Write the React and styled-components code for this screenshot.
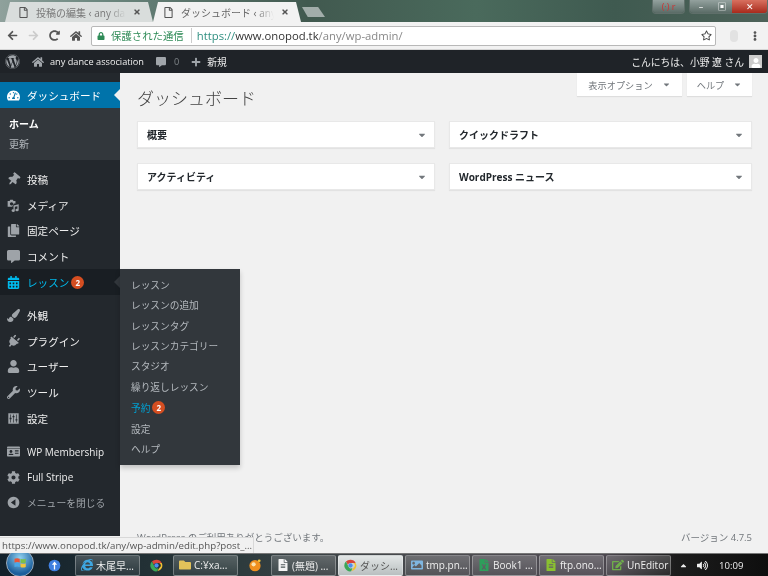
import React from 'react'
import styled, { createGlobalStyle } from 'styled-components'
import {
  FaWordpress, FaHome, FaCommentAlt, FaPlus, FaTachometerAlt, FaThumbtack, FaCopy,
  FaCalendarAlt, FaPaintBrush, FaPlug, FaUser, FaWrench, FaIdCard, FaCog,
  FaRegStar, FaLock, FaArrowLeft, FaArrowRight, FaRedoAlt, FaEllipsisV,
  FaRegFile, FaTimes, FaCaretDown, FaCaretUp, FaVolumeUp, FaInternetExplorer, FaFolder,
  FaFileExcel, FaImage, FaEdit, FaFileAlt
} from 'react-icons/fa'

const JP = `"Open Sans", "Noto Sans CJK JP", sans-serif`

const GlobalStyle = createGlobalStyle`
  html, body { margin: 0; padding: 0; }
  body { width: 768px; height: 576px; overflow: hidden; font-family: ${JP}; }
  * { box-sizing: border-box; }
`

const Screen = styled.div`
  position: relative;
  width: 768px;
  height: 576px;
  display: flex;
  flex-direction: column;
  overflow: hidden;
  background: #f1f1f1;
  filter: blur(0.3px);
`

const TabStrip = styled.div`
  height: 22px;
  display: flex;
  align-items: flex-end;
  padding-left: 5px;
  position: relative;
  background: linear-gradient(90deg, #8fa19c 0, #6d8880 12%, #41594f 40%, #4a6a5c 62%, #3f5a50 80%, #4d6259 100%);
`

const Tab = styled.div`
  width: 148px;
  height: 20px;
  display: flex;
  align-items: center;
  gap: 7px;
  padding: 0 12px 0 ${p => (p.$active ? 10 : 13)}px;
  font-size: 10px;
  white-space: nowrap;
  color: ${p => (p.$active ? '#666' : '#777')};
  background: ${p => (p.$active ? '#f2f2f2' : '#d9dddc')};
  clip-path: polygon(5px 0, calc(100% - 5px) 0, 100% 100%, 0 100%);
  svg { flex: none; color: #555; }
`

const TabTitle = styled.span`
  flex: 1;
  overflow: hidden;
  mask-image: linear-gradient(90deg, #000 80%, transparent);
`

const NewTab = styled.div`
  width: 23px;
  height: 10px;
  margin: 0 0 5px 1px;
  background: #a2adaa;
  clip-path: polygon(0 0, 70% 0, 100% 100%, 25% 100%);
`

const WindowControls = styled.div`
  position: absolute;
  top: 0;
  left: 652px;
  display: flex;
  gap: 4px;
`

const ControlGroup = styled.div`
  height: 14px;
  display: flex;
  border: 1px solid #5f6f6a;
  border-top: 0;
  border-radius: 0 0 4px 4px;
  overflow: hidden;
`

const ControlButton = styled.div`
  width: ${p => p.$w}px;
  display: flex;
  align-items: center;
  justify-content: center;
  font-size: 9px;
  line-height: 1;
  color: ${p => p.$color || '#fff'};
  background: ${p => p.$bg || 'linear-gradient(#93a19e, #5a6b66)'};
`

const Toolbar = styled.div`
  height: 28px;
  display: flex;
  align-items: center;
  background: #f2f2f2;
  border-bottom: 1px solid #d5d5d5;
`

const NavIcons = styled.div`
  width: 91px;
  display: flex;
  align-items: center;
  gap: 10px;
  padding-left: 7px;
  color: #555;
  font-size: 11px;
`

const AddressBar = styled.div`
  width: 625px;
  height: 20px;
  display: flex;
  align-items: center;
  padding: 0 3px 0 5px;
  background: #fff;
  border: 1px solid #b8b8b8;
  border-radius: 2px;
  font-size: 11.3px;
  white-space: nowrap;
`

const Secure = styled.span`
  display: flex;
  align-items: center;
  gap: 6px;
  color: #2e8b57;
  font-size: 10.4px;
  padding-right: 7px;
  margin-right: 5px;
  border-right: 1px solid #ccc;
`

const Url = styled.span`
  flex: 1;
  color: #888;
  b { font-weight: 400; color: #333; }
  i { font-style: normal; color: #2f8f80; }
`

const ExtraIcons = styled.div`
  flex: 1;
  display: flex;
  align-items: center;
  justify-content: space-between;
  padding: 0 8px 0 14px;
  color: #555;
  font-size: 10px;
`

const ExtIcon = styled.span`
  width: 8px;
  height: 12px;
  border-radius: 4px;
  background: #e2e2e2;
`

const AdminBar = styled.div`
  height: 23px;
  display: flex;
  align-items: center;
  background: #1f2328;
  color: #eee;
  font-size: 9.2px;
  padding: 0 6px 0 5px;
  white-space: nowrap;
`

const BarItem = styled.div`
  display: flex;
  align-items: center;
  gap: ${p => p.$gap || 6}px;
  margin-right: ${p => p.$mr || 0}px;
  color: ${p => (p.$muted ? '#7f8488' : '#eee')};
  svg { color: #a0a5aa; }
`

const BarLabel = styled.span`
  font-size: 9.8px;
`

const Greeting = styled.div`
  margin-left: auto;
  display: flex;
  align-items: center;
  gap: 5px;
  font-size: 9.8px;
`

const Avatar = styled.div`
  width: 13px;
  height: 13px;
  display: flex;
  align-items: flex-end;
  justify-content: center;
  background: #ccc;
  color: #fff;
  font-size: 10px;
`

const Body = styled.div`
  flex: 1;
  display: flex;
  min-height: 0;
`

const Sidebar = styled.nav`
  width: 120px;
  height: 463px;
  flex: none;
  padding-top: 9px;
  background: #23282d;
`

const MenuItem = styled.div`
  position: relative;
  height: ${p => p.$h || 25.6}px;
  display: flex;
  align-items: center;
  gap: 7px;
  padding-left: 7px;
  font-size: ${p => p.$size || 10.6}px;
  white-space: nowrap;
  color: ${p => p.$color || '#eee'};
  background: ${p => p.$bg || 'transparent'};
  svg { flex: none; width: 13px; color: ${p => p.$iconColor || '#9ea3a8'}; }
`

const Tilted = styled.span`
  display: flex;
  transform: rotate(${p => p.$deg}deg);
`

const MenuLabel = styled.span`
  display: flex;
  align-items: center;
`

const Pointer = styled.span`
  position: absolute;
  right: 0;
  top: 50%;
  margin-top: -6px;
  border: 6px solid transparent;
  border-right-color: ${p => p.$color};
  border-left: 0;
`

const SubMenu = styled.div`
  height: 52px;
  padding: 6px 0 0 9px;
  margin-bottom: 7px;
  background: #32373c;
  font-size: 10px;
  color: #b4b9be;
  line-height: 20px;
  strong { display: block; color: #fff; font-weight: 700; }
`

const Gap = styled.div`
  height: 8px;
`

const Badge = styled.span`
  display: inline-flex;
  align-items: center;
  justify-content: center;
  width: 13px;
  height: 13px;
  margin-left: 2px;
  border-radius: 50%;
  background: #d54e21;
  color: #fff;
  font-size: 8px;
  font-weight: 700;
`

const Flyout = styled.div`
  position: absolute;
  left: 120px;
  top: 269px;
  width: 120px;
  height: 196px;
  padding: 6px 0 0 11px;
  background: #32373c;
  box-shadow: 0 3px 5px rgba(0, 0, 0, 0.2);
  font-size: 9.7px;
`

const FlyoutLink = styled.div`
  height: ${p => p.$h || 20.3}px;
  display: flex;
  align-items: center;
  white-space: nowrap;
  color: ${p => (p.$active ? '#00a0d2' : '#b4b9be')};
`

const Main = styled.main`
  flex: 1;
  min-width: 0;
  display: flex;
  flex-direction: column;
  padding: 0 16px 0 17px;
`

const ScreenMeta = styled.div`
  float: right;
  display: flex;
  gap: 5px;
`

const Top = styled.div`
  display: flow-root;
`

const MetaButton = styled.div`
  height: 23px;
  width: ${p => p.$w}px;
  display: flex;
  align-items: center;
  justify-content: center;
  gap: 9px;
  background: #fff;
  box-shadow: 0 1px 1px rgba(0, 0, 0, 0.08);
  color: #72777c;
  font-size: 9.2px;
`

const Title = styled.h1`
  margin: 0;
  padding-top: 14px;
  font-size: 17px;
  line-height: 24px;
  font-weight: 300;
  color: #444;
`

const Boxes = styled.div`
  margin-top: 10px;
  display: grid;
  grid-template-columns: 298px 303px;
  column-gap: 14px;
  row-gap: 15px;
`

const Postbox = styled.div`
  height: 27px;
  display: flex;
  align-items: center;
  justify-content: space-between;
  padding: 0 7px 0 9px;
  background: #fff;
  box-shadow: 0 1px 1px rgba(0, 0, 0, 0.06);
  border: 1px solid #e8e8e8;
  font-size: 10px;
  font-weight: 700;
  color: #23282d;
  svg { color: #72777c; }
`

const Footer = styled.footer`
  margin-top: auto;
  height: 22px;
  display: flex;
  justify-content: space-between;
  color: #72777c;
  font-size: 9.5px;
  line-height: 14px;
`

const StatusTip = styled.div`
  position: absolute;
  left: 0;
  bottom: 23px;
  width: 254px;
  height: 16px;
  padding-left: 2px;
  background: #f1f1f1;
  border: 1px solid #d8d8d8;
  border-width: 1px 1px 0 0;
  color: #555;
  font-size: 9.7px;
  line-height: 15px;
  white-space: nowrap;
`

const Taskbar = styled.div`
  height: 23px;
  display: flex;
  align-items: center;
  gap: 2px;
  color: #eee;
  font-size: 10px;
  white-space: nowrap;
  background: linear-gradient(90deg, #12202a 0, #2c3a3c 30%, #4a4b4f 55%, #4f4a52 78%, #1c1c1c 88%, #0e0e0e 100%);
  border-top: 1px solid #777;
`

const StartOrb = styled.div`
  width: 28px;
  height: 28px;
  margin: -5px 0 0 6px;
  display: flex;
  align-items: center;
  justify-content: center;
  flex: none;
  border-radius: 50%;
  background: radial-gradient(circle at 50% 30%, #8fd0f0, #1c5f9c 70%);
  border: 1px solid #9ab;
`

const TaskIcon = styled.div`
  width: ${p => p.$w}px;
  flex: none;
  display: flex;
  justify-content: center;
`

const TaskButton = styled.div`
  width: 65px;
  height: 21px;
  flex: none;
  display: flex;
  align-items: center;
  gap: 3px;
  padding-left: 5px;
  overflow: hidden;
  border: 1px solid rgba(255, 255, 255, 0.3);
  border-radius: 2px;
  background: ${p => (p.$active
    ? 'linear-gradient(#e2e6e6, #b9bfc0)'
    : 'linear-gradient(rgba(255,255,255,0.2), rgba(255,255,255,0.05))')};
  color: ${p => (p.$active ? '#555' : '#eee')};
  svg { flex: none; color: ${p => p.$color}; font-size: 12px; }
`

const Tray = styled.div`
  display: flex;
  align-items: center;
  width: 85px;
  flex: none;
  padding-left: 6px;
  gap: 9px;
  color: #eee;
  span { font-size: 9.6px; margin-left: 2px; }
`

const MediaIcon = () => (
  <svg viewBox="0 0 20 20" width="13" height="13" fill="currentColor" fillRule="evenodd">
    <path d="M1 3h3l1-2h4l1 2h3v4h-2.5L8 12H1zM7 5a2.5 2.5 0 1 0 .01 0z" />
    <path d="M10 10l8-2v9a2.5 2 0 1 1-2-2V11l-4 1v6a2.5 2 0 1 1-2-2z" />
  </svg>
)

const SettingsIcon = () => (
  <svg viewBox="0 0 20 20" width="13" height="13" fill="currentColor" fillRule="evenodd">
    <path d="M2 2h16v16H2zM5 4v5H4v2h1v5h1v-5h1V9H6V4zM9.500 4v2h-1v2h1v8h1V8h1V6h-1V4zM14 4v7h-1v2h1v3h1v-3h1v-2h-1V4z" />
  </svg>
)

const CollapseIcon = () => (
  <svg viewBox="0 0 20 20" width="13" height="13" fill="currentColor" fillRule="evenodd">
    <path d="M10 1a9 9 0 1 0 .01 0zM13 5v10L6 10z" />
  </svg>
)

const ChromeIcon = () => (
  <svg viewBox="0 0 20 20" width="13" height="13">
    <path d="M10 1a9 9 0 0 1 8 5h-8a4 4 0 0 0-4 3L3 4a9 9 0 0 1 7-3z" fill="#d9453a" />
    <path d="M18 6a9 9 0 0 1-7 13l4-6a4 4 0 0 0-1-7z" fill="#f2c232" />
    <path d="M3 4l4 8a4 4 0 0 0 6 2l-2 5A9 9 0 0 1 3 4z" fill="#3aa757" />
    <circle cx="10" cy="10" r="3.300" fill="#4a8df0" />
  </svg>
)

const WindowsFlag = () => (
  <svg viewBox="0 0 20 20" width="15" height="15">
    <path d="M2 5c2-1 5-1 7 0v5c-2-1-5-1-7 0z" fill="#e8563a" />
    <path d="M10 5c2 1 5 1 7 0v5c-2 1-5 1-7 0z" fill="#7cc04a" />
    <path d="M2 11c2-1 5-1 7 0v5c-2-1-5-1-7 0z" fill="#4aa8e8" />
    <path d="M10 11c2 1 5 1 7 0v5c-2 1-5 1-7 0z" fill="#f4c53a" />
  </svg>
)

const InfoBall = () => (
  <svg viewBox="0 0 20 20" width="13" height="13">
    <circle cx="10" cy="10" r="9" fill="#3f7fe0" />
    <path d="M10 4l4 5h-3v7H9V9H6z" fill="#fff" />
  </svg>
)

const OrangeBall = () => (
  <svg viewBox="0 0 20 20" width="14" height="14">
    <circle cx="10" cy="11" r="8" fill="#f0901f" />
    <circle cx="8" cy="9" r="3" fill="#fbe3b0" />
    <circle cx="16" cy="4" r="2" fill="#f4c53a" />
  </svg>
)

const mainMenu = [
  { label: '投稿', icon: <Tilted $deg={40}><FaThumbtack size={13} /></Tilted> },
  { label: 'メディア', icon: <MediaIcon /> },
  { label: '固定ページ', icon: <FaCopy size={13} /> },
  { label: 'コメント', icon: <FaCommentAlt size={13} /> }
]
const toolMenu = [
  { label: '外観', icon: <FaPaintBrush size={13} /> },
  { label: 'プラグイン', icon: <Tilted $deg={40}><FaPlug size={13} /></Tilted> },
  { label: 'ユーザー', icon: <FaUser size={13} /> },
  { label: 'ツール', icon: <FaWrench size={13} /> },
  { label: '設定', icon: <SettingsIcon /> }
]
const lessonLinks = ['レッスン', 'レッスンの追加', 'レッスンタグ', 'レッスンカテゴリー', 'スタジオ', '繰り返しレッスン']
const boxes = ['概要', 'クイックドラフト', 'アクティビティ', 'WordPress ニュース']

function renderMenu(items) {
  return items.map(({ label, icon }) => (
    <MenuItem key={label}>{icon}{label}</MenuItem>
  ))
}

export default function App() {
  return (
    <Screen>
      <GlobalStyle />
      <TabStrip>
        <Tab>
          <FaRegFile size={11} />
          <TabTitle>投稿の編集 ‹ any dance</TabTitle>
          <FaTimes size={8} />
        </Tab>
        <Tab $active>
          <FaRegFile size={11} />
          <TabTitle>ダッシュボード ‹ any d</TabTitle>
          <FaTimes size={8} />
        </Tab>
        <NewTab />
        <WindowControls>
          <ControlGroup>
            <ControlButton $w={31} $color="#c33">(·) r</ControlButton>
          </ControlGroup>
          <ControlGroup>
            <ControlButton $w={22}>–</ControlButton>
            <ControlButton $w={20}>▣</ControlButton>
            <ControlButton $w={35} $bg="linear-gradient(#d8705f, #a82a1c)">✕</ControlButton>
          </ControlGroup>
        </WindowControls>
      </TabStrip>
      <Toolbar>
        <NavIcons>
          <FaArrowLeft />
          <FaArrowRight color="#ccc" />
          <FaRedoAlt />
          <FaHome size={12} />
        </NavIcons>
        <AddressBar>
          <Secure><FaLock size={8} />保護された通信</Secure>
          <Url><i>https://</i><b>www.onopod.tk</b>/any/wp-admin/</Url>
          <FaRegStar size={11} color="#444" />
        </AddressBar>
        <ExtraIcons>
          <ExtIcon />
          <FaEllipsisV />
        </ExtraIcons>
      </Toolbar>
      <AdminBar>
        <BarItem $mr={12}><FaWordpress size={15} /></BarItem>
        <BarItem $mr={12}><FaHome size={12} />any dance association</BarItem>
        <BarItem $mr={12} $muted $gap={8}><FaCommentAlt size={10} />0</BarItem>
        <BarItem $gap={6}><FaPlus size={10} /><BarLabel>新規</BarLabel></BarItem>
        <Greeting>
          こんにちは、小野 遼 さん
          <Avatar><FaUser /></Avatar>
        </Greeting>
      </AdminBar>
      <Body>
        <Sidebar>
          <MenuItem $h={26} $bg="#0073aa" $iconColor="#fff" $color="#fff">
            <FaTachometerAlt size={13} />ダッシュボード
            <Pointer $color="#f1f1f1" />
          </MenuItem>
          <SubMenu>
            <strong>ホーム</strong>
            更新
          </SubMenu>
          {renderMenu(mainMenu)}
          <MenuItem $bg="#191e23" $color="#00b9eb" $iconColor="#00b9eb">
            <FaCalendarAlt size={13} />
            <MenuLabel>レッスン<Badge>2</Badge></MenuLabel>
            <Pointer $color="#32373c" />
          </MenuItem>
          <Gap />
          {renderMenu(toolMenu)}
          <Gap />
          <MenuItem $size={10}><FaIdCard size={13} />WP Membership</MenuItem>
          <MenuItem $size={10}><FaCog size={13} />Full Stripe</MenuItem>
          <MenuItem $size={9.8} $color="#a0a5aa"><CollapseIcon />メニューを閉じる</MenuItem>
        </Sidebar>
        <Main>
          <Top>
            <ScreenMeta>
              <MetaButton $w={105}>表示オプション <FaCaretDown size={9} /></MetaButton>
              <MetaButton $w={65}>ヘルプ <FaCaretDown size={9} /></MetaButton>
            </ScreenMeta>
            <Title>ダッシュボード</Title>
          </Top>
          <Boxes>
            {boxes.map(label => (
              <Postbox key={label}>{label}<FaCaretDown size={10} /></Postbox>
            ))}
          </Boxes>
          <Footer>
            <span>WordPress のご利用ありがとうございます。</span>
            <span>バージョン 4.7.5</span>
          </Footer>
        </Main>
      </Body>
      <Flyout>
        {lessonLinks.map(label => <FlyoutLink key={label}>{label}</FlyoutLink>)}
        <FlyoutLink $active $h={22}>予約<Badge>2</Badge></FlyoutLink>
        <FlyoutLink>設定</FlyoutLink>
        <FlyoutLink>ヘルプ</FlyoutLink>
      </Flyout>
      <StatusTip>https://www.onopod.tk/any/wp-admin/edit.php?post_...</StatusTip>
      <Taskbar>
        <StartOrb><WindowsFlag /></StartOrb>
        <TaskIcon $w={37}><InfoBall /></TaskIcon>
        <TaskButton $color="#3ea6e0"><FaInternetExplorer />木尾早...</TaskButton>
        <TaskIcon $w={29}><ChromeIcon /></TaskIcon>
        <TaskButton $color="#e2c25a"><FaFolder />C:¥xa...</TaskButton>
        <TaskIcon $w={29}><OrangeBall /></TaskIcon>
        <TaskButton $color="#f4f4f4"><FaFileAlt />(無題) ...</TaskButton>
        <TaskButton $active><ChromeIcon />ダッシ...</TaskButton>
        <TaskButton $color="#7fb6e0"><FaImage />tmp.pn...</TaskButton>
        <TaskButton $color="#2e9e5b"><FaFileExcel />Book1 ...</TaskButton>
        <TaskButton $color="#8ac030"><FaFileAlt />ftp.ono...</TaskButton>
        <TaskButton $color="#6fae4a"><FaEdit />UnEditor</TaskButton>
        <Tray>
          <FaCaretUp size={9} />
          <FaVolumeUp size={11} />
          <span>10:09</span>
        </Tray>
      </Taskbar>
    </Screen>
  )
}
